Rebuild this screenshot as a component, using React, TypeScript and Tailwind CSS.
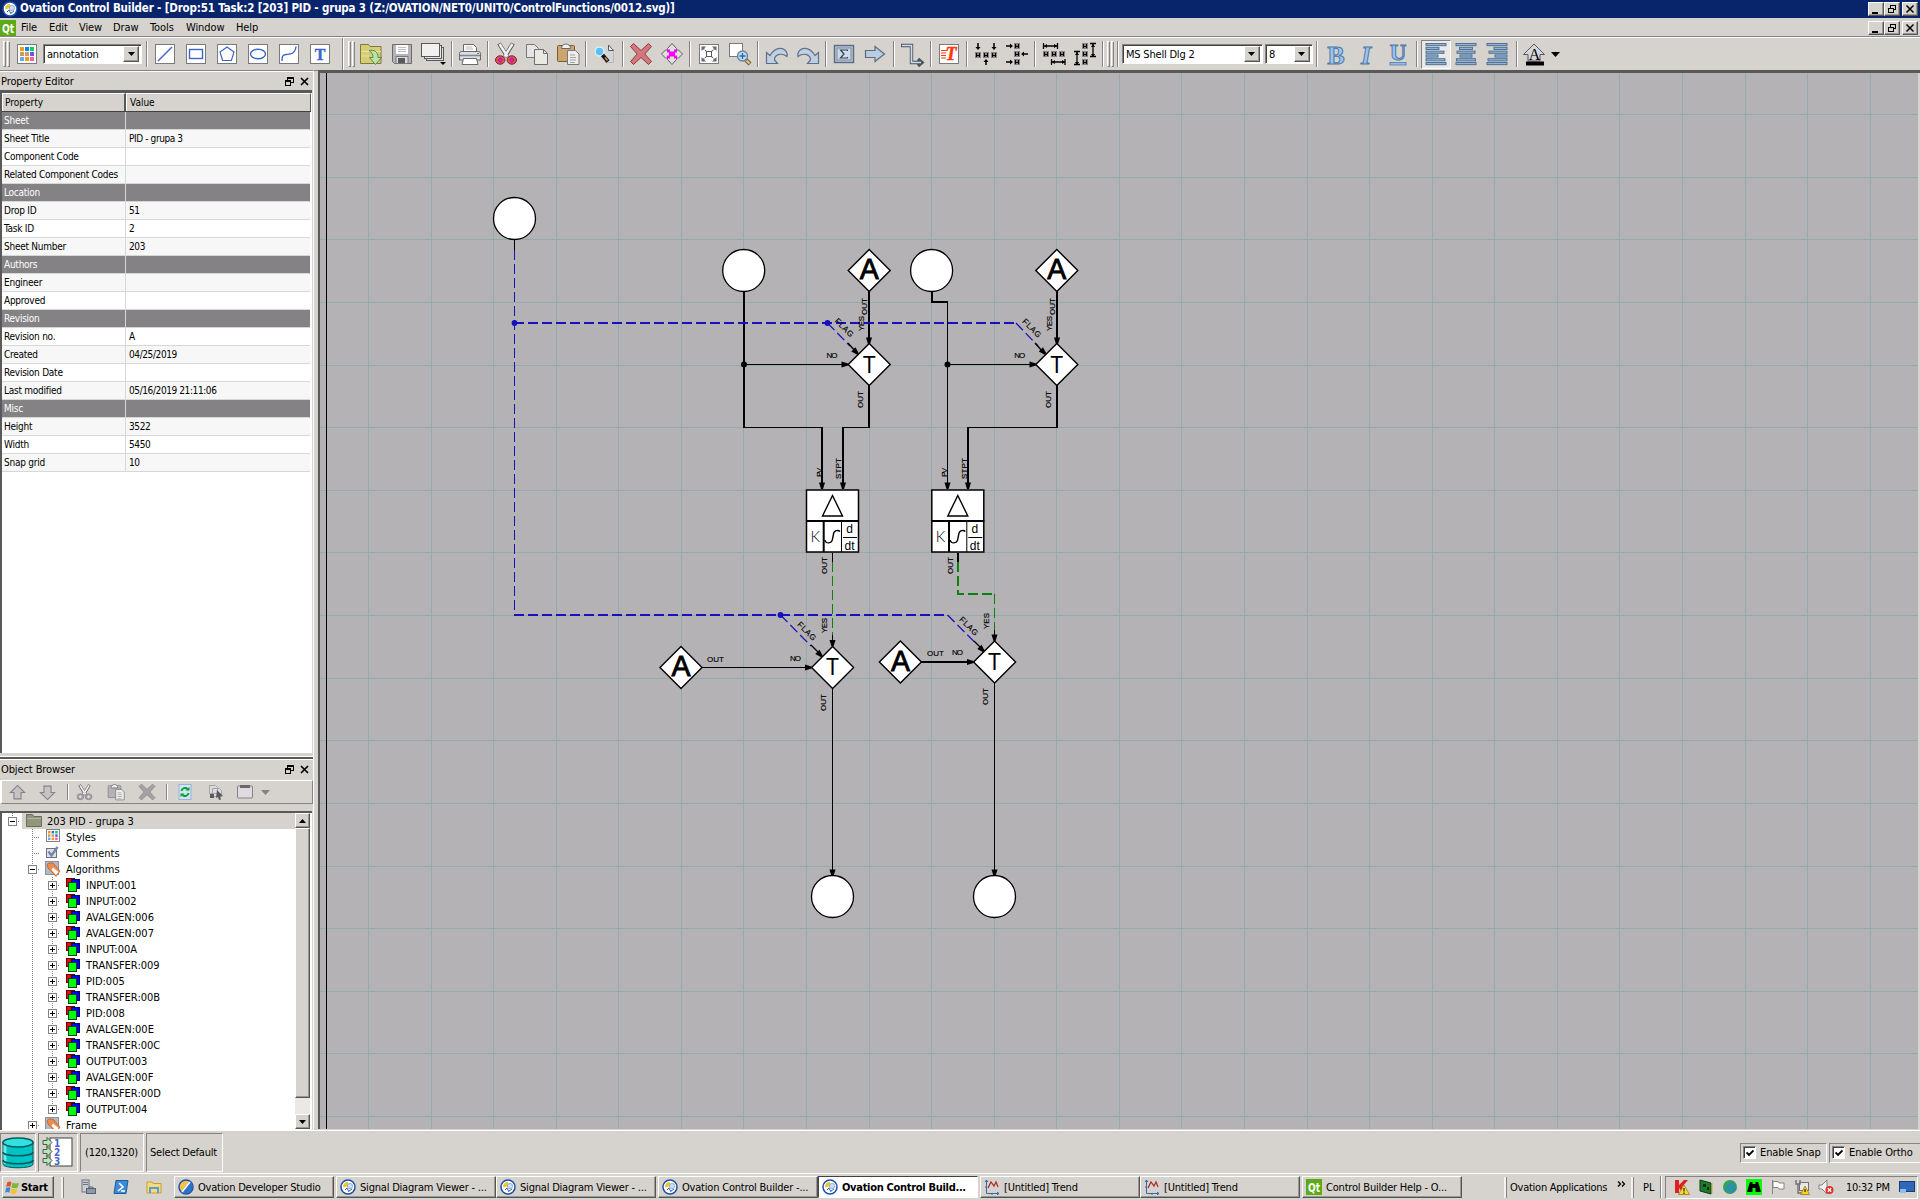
import React from "react";

const OUT =
  "border border-t-white border-l-white border-b-[#555555] border-r-[#555555] shadow-[inset_-1px_-1px_0_#9a9894]";
const IN = "border border-t-[#848284] border-l-[#848284] border-b-white border-r-white";
const FIELD =
  "border border-t-[#848284] border-l-[#848284] border-b-white border-r-white shadow-[inset_1px_1px_0_#424142]";

type P = { children?: React.ReactNode; s?: number; v?: string; c?: string };
const Svg = ({ children, s = 24, v = "0 0 24 24", c = "" }: P) => (
  <svg width={s} height={s} viewBox={v} className={"block shrink-0 overflow-visible " + c} fill="none">
    {children}
  </svg>
);

/* ---------- toolbar icons ---------- */
const Tile = ({ children }: { children: React.ReactNode }) => (
  <Svg>
    <rect x="2.5" y="2.5" width="19" height="19" fill="#fff" stroke="#7a7a7a" />
    {children}
  </Svg>
);
const PAL = ["#ff9a00", "#0086ff", "#00d36a", "#ce9a63", "#c79a73", "#6a55e8", "#6aa6ff", "#ff9a00", "#ff5f9a"];
const Palette = () => (
  <Tile>
    {PAL.map((c, i) => (
      <rect key={i} x={5 + (i % 3) * 5} y={5 + Math.floor(i / 3) * 5} width="4" height="4" fill={c} />
    ))}
  </Tile>
);
const B = "#3a65ce";
const LineI = () => <Tile><path d="M5 19 19 5" stroke={B} strokeWidth="1.4" /></Tile>;
const RectI = () => <Tile><rect x="5.5" y="7.5" width="13" height="9" stroke={B} strokeWidth="1.4" /></Tile>;
const PentI = () => <Tile><path d="m12 5 7 5-2.6 8.5H7.6L5 10z" stroke={B} strokeWidth="1.2" /></Tile>;
const EllI = () => <Tile><ellipse cx="12" cy="12" rx="7.5" ry="4.8" stroke={B} strokeWidth="1.4" /></Tile>;
const CurveI = () => <Tile><path d="M5 19c0-4 0-6 4-6.500s9 0 10-8" stroke={B} strokeWidth="1.4" /></Tile>;
const TextI = () => (
  <Tile>
    <text x="12" y="17.500" textAnchor="middle" fill={B} stroke={B} strokeWidth=".4" className="text-[16px] font-bold [font-family:'Liberation_Serif',serif]">T</text>
  </Tile>
);
const OpenI = () => (
  <Svg>
    <path d="M1.500 4V2.500h8l1.500 2h11V21.500H1.500z" fill="#d6cd77" stroke="#7e7a3c" />
    <path d="M2 9.500h20M2 14h8" stroke="#e9e39c" />
    <path d="M10 8.500c5-1 9 1 9 7h3.500l-6 7-6-7H14c0-3-1-5-4-7z" fill="#b9e6a8" stroke="#5c8a4c" />
  </Svg>
);
const SaveI = () => (
  <Svg>
    <path d="M2.500 2.500h19v19h-17l-2-2z" fill="#b4b4b6" stroke="#6b696b" />
    <rect x="6" y="3" width="12" height="9" fill="#fafafa" />
    <path d="M8 5.500h8M8 7.500h8M8 9.500h8" stroke="#bdbdbd" />
    <rect x="6" y="14.500" width="12" height="7" fill="#dcdcdc" stroke="#77787a" />
    <rect x="8" y="16" width="7" height="5" fill="#5a595a" />
  </Svg>
);
const SheetsI = () => (
  <svg width="30" height="26" viewBox="0 0 30 26" fill="none">
    <rect x="8.500" y="6.500" width="17" height="13" fill="#dedfe0" stroke="#5a595a" />
    <rect x="6.500" y="4.500" width="17" height="13" fill="#e8e8e8" stroke="#5a595a" />
    <rect x="3.500" y="2.500" width="18" height="13" fill="#f0f0f0" stroke="#5a595a" />
    <path d="M22 21h6l-3 3z" fill="#000" />
  </svg>
);
const PrintI = () => (
  <Svg>
    <path d="M5.500 10V2.500h10l3 3V10z" fill="#fafafa" stroke="#6b696b" />
    <path d="M8 5h6M8 7h7" stroke="#bbb" />
    <path d="M1.500 11.500q0-2 2-2h17q2 0 2 2V18h-21z" fill="#dcdee2" stroke="#6b696b" />
    <path d="M2 13.500h20" stroke="#7f8690" strokeWidth="1.500" />
    <path d="M19 11.500h2" stroke="#40a040" />
    <path d="M5.500 16.500h13l1.500 6H4z" fill="#fff" stroke="#6b696b" />
  </Svg>
);
const CutI = ({ g }: { g?: boolean }) => (
  <Svg s={g ? 17 : 24}>
    <path d="M5 1.500 13.500 15M19 1.500 10.500 15" stroke="#5f6062" strokeWidth="4.200" />
    <path d="M5.500 2 13.500 14.500M18.500 2l-8 12.500" stroke="#f0f0f0" strokeWidth="2.400" />
    <ellipse cx="6.200" cy="18" rx="4.700" ry="4.200" fill={g ? "#a5a2a5" : "#d9585f"} stroke={g ? "#848284" : "#7b2028"} />
    <ellipse cx="17.800" cy="18" rx="4.700" ry="4.200" fill={g ? "#a5a2a5" : "#d9585f"} stroke={g ? "#848284" : "#7b2028"} />
    <path d="m6.200 15.700 2.300 2.300-2.300 2.300L3.900 18zM17.800 15.700l2.300 2.300-2.300 2.300-2.300-2.300z" fill={g ? "#dedbde" : "#ff10e0"} stroke={g ? "none" : "#7b2028"} strokeWidth=".7" />
  </Svg>
);
const CopyI = () => (
  <Svg>
    <path d="M1.500 2.500h8l4 4v9h-12z" fill="#e4e5e4" stroke="#77787a" />
    <path d="M9.500 7.500h9l4 4v11h-13z" fill="#e9e8e2" stroke="#6b6c6e" />
    <path d="M18.500 7.500v4h4" stroke="#6b6c6e" />
  </Svg>
);
const PasteI = ({ g }: { g?: boolean }) => (
  <Svg s={g ? 18 : 24}>
    <rect x="1.500" y="3.500" width="17" height="16" rx="1" fill={g ? "#b5b2b5" : "#cda46c"} stroke={g ? "#848284" : "#7b5a30"} />
    <path d="M5.500 6.500c0-6 9-6 9 0z" fill="#f0f0f0" stroke="#6b696b" />
    <path d="M11.500 8.500h8l3.500 3.500v10.500H11.500z" fill="#ececec" stroke="#77787a" />
    <path d="M14 13h5M14 15.500h6M14 18h6M14 20.500h5" stroke="#a5a2a5" />
  </Svg>
);
const PreviewI = () => (
  <Svg>
    <path d="M10 3.500h7.500l4 4.500v12H12z" fill="#d4d5d8" />
    <path d="M21.500 8v12.500H13" stroke="#b5b6ba" />
    <path d="M16.500 3v5.500h5z" fill="#f0f0f0" stroke="#5a595a" />
    <circle cx="7.500" cy="9.500" r="4.400" fill="#5cc0f4" stroke="#d8eef8" strokeWidth="1.500" />
    <path d="m10.500 13 5.500 6.500" stroke="#141414" strokeWidth="4" />
    <path d="m13 15.500 2.500 3" stroke="#c98a50" strokeWidth="1.700" />
  </Svg>
);
const XI = ({ g }: { g?: boolean }) => (
  <Svg s={g ? 18 : 24}>
    <path d="M4.500 1.500 12 8.500 19.500 1.500 22.500 4.500 15.800 12 22.500 19.500 19.500 22.500 12 15.500 4.500 22.500 1.500 19.500 8.200 12 1.500 4.500z" fill={g ? "#a5a2a5" : "#d4777b"} stroke={g ? "#848284" : "#8a3a40"} />
  </Svg>
);
const MoveI = () => (
  <Svg>
    <path d="m12 1.500 4.500 5V8l2 0 4 4-4 4h-2v1.500L12 22.500l-4.500-5V16h-2l-4-4 4-4h2V6.500z" fill="#dedfe0" stroke="#5f6062" />
    <path d="M7 7.500h3v2h4v-2h3v3h-2v3h2v3h-3v-2h-4v2H7v-3h2v-3H7z" fill="#ff00ff" />
  </Svg>
);
const FitI = () => (
  <Tile>
    <rect x="9.500" y="9.500" width="5" height="5" fill="#fff" stroke="#5a595a" />
    <path d="M4.500 4.500H9L4.500 9zM19.500 4.500V9L15 4.500zM4.500 19.500V15L9 19.500zM19.500 19.500H15l4.500-4.500z" fill="#6b696b" />
    <path d="m6 6 3 3M18 6l-3 3M6 18l3-3M18 18l-3-3" stroke="#6b696b" strokeWidth="1.400" strokeDasharray="2 1" />
  </Tile>
);
const ZoomI = () => (
  <Svg>
    <rect x="1.500" y="1.500" width="13" height="13" fill="#fff" stroke="#77787a" />
    <path d="m18 18 4 4" stroke="#6f6038" strokeWidth="4" />
    <path d="m18.500 18.500 3 3" stroke="#e0cc88" strokeWidth="2" />
    <circle cx="14.500" cy="14" r="5" fill="#b8dcf4" stroke="#6c7f90" strokeWidth="1.300" />
    <path d="M14.500 11v6M11.500 14h6" stroke="#2f65a8" strokeWidth="1.300" />
  </Svg>
);
const UndoI = ({ flip }: { flip?: boolean }) => (
  <Svg c={flip ? "-scale-x-100" : ""}>
    <path d="M1.500 10.500v11h11L9.500 18c0-5 6-8 12.500-3.500 2-7-9-13.500-17-1z" fill="#bfd0e4" stroke="#5e7088" strokeWidth="1.200" />
  </Svg>
);
const SigmaI = () => (
  <Svg>
    <rect x="2.500" y="3.500" width="19" height="17" fill="#b4c4da" stroke="#5c6a7c" strokeWidth="1.400" />
    <rect x="5" y="6" width="14" height="12" fill="#cddbea" stroke="#7c8a9c" />
    <path d="M15.500 9V8H8.500l3.500 4-3.500 4h7v-1" stroke="#33404f" strokeWidth="1.200" />
  </Svg>
);
const ArrI = () => (
  <Svg>
    <path d="M2.500 8.500H12V4.500L21.500 12 12 19.500v-4H2.500z" fill="#b8cde4" stroke="#5c6a7c" strokeWidth="1.200" />
  </Svg>
);
const ConnI = () => (
  <Svg>
    <path d="M1 3.500h10.500V20.500H21M18 17l4 3.500-4 3.500" stroke="#4a5560" strokeWidth="3.400" />
    <path d="M2 3.500h9.500v17H21" stroke="#d0dcea" strokeWidth="1.600" />
  </Svg>
);
const RedTI = () => (
  <Tile>
    <text x="14" y="18" textAnchor="middle" fill="#f83810" stroke="#f83810" strokeWidth=".5" className="text-[18px] font-bold italic [font-family:'Liberation_Serif',serif]">T</text>
    <path d="M4 8.500h6M4 11h5M4 13.500h5M4 16h5" stroke="#f83810" />
  </Tile>
);
const Sq = ({ x, y }: { x: number; y: number }) => (
  <g shapeRendering="crispEdges">
    <rect x={x} y={y} width="6" height="6" fill="#848284" />
    <path d={`M${x + 1.5} ${y + 1}v4M${x + 4.5} ${y + 1}v4M${x + 1} ${y + 3}h4`} stroke="#000" />
  </g>
);
const A1 = () => (
  <Svg>
    <Sq x={1} y={10} /><Sq x={9} y={10} /><Sq x={17} y={10} />
    <path d="M4 1v5M20 1v5M12 18v5" stroke="#000" strokeWidth="1.500" />
    <path d="M1.500 5h5L4 8zM17.500 5h5L20 8zM9.500 20h5L12 17z" fill="#000" />
  </Svg>
);
const A2 = () => (
  <Svg>
    <Sq x={9} y={1} /><Sq x={9} y={9} /><Sq x={9} y={17} />
    <path d="M1 4h4M23 12h-4M1 20h4" stroke="#000" strokeWidth="1.500" />
    <path d="M5 1.500v5L8 4zM19 9.500v5L16 12zM5 17.500v5L8 20z" fill="#000" />
  </Svg>
);
const A3 = () => (
  <Svg>
    <Sq x={1} y={9} /><Sq x={9} y={9} /><Sq x={17} y={9} />
    <path d="M1.500 1v6M15.500 1v6M2 4h13M9.500 17v6M23 17v6M10 20h13" stroke="#000" strokeWidth="1.300" />
    <path d="M5 2v4L2 4zM12 2v4l3-2zM13 18v4l-3-2zM20 18v4l3-2z" fill="#000" />
  </Svg>
);
const A4 = () => (
  <Svg>
    <Sq x={9} y={1} /><Sq x={9} y={9} /><Sq x={9} y={17} />
    <path d="M1 9.500h6M1 22.500h6M4 10v13M17 1.500h6M17 14.500h6M20 2v13" stroke="#000" strokeWidth="1.300" />
    <path d="M2 13h4l-2-3zM2 20h4l-2 3zM18 5h4l-2-3zM18 12h4l-2 3z" fill="#000" />
  </Svg>
);
const Letter = ({ ch, c }: { ch: string; c: string }) => (
  <Svg s={28} v="0 0 28 28">
    <text x="14" y={ch === "U" ? 20 : 23.5} textAnchor="middle" fill="#9cc2f0" stroke="#4f7aa8" strokeWidth="1" className={"leading-none [font-family:'Liberation_Serif',serif] " + c}>{ch}</text>
    {ch === "U" && <rect x="6" y="22.500" width="16" height="2.500" fill="#94bcec" stroke="#4f7aa8" strokeWidth=".8" />}
  </Svg>
);
const AlignI = ({ m }: { m: "l" | "c" | "r" }) => (
  <Svg>
    {[20, 13, 18, 12, 19, 20].map((w, i) => (
      <rect key={i} x={m === "l" ? 2 : m === "c" ? 12 - w / 2 : 22 - w} y={1.500 + i * 3.800} width={w} height="2.200" fill="#8fb4dc" stroke="#49698c" strokeWidth=".9" />
    ))}
  </Svg>
);
const ColorI = () => (
  <Svg>
    <path d="M12 2 22.500 12.500H18V19H6v-6.500H1.500z" fill="#d6d7de" stroke="#5a595a" />
    <text x="12.500" y="17.500" textAnchor="middle" fill="#000" className="text-[16px] [font-family:'Liberation_Serif',serif]">A</text>
    <rect x="4" y="19.500" width="18" height="4" fill="#000" />
  </Svg>
);

const Btn = ({ children, w = "w-[31px]" }: { children: React.ReactNode; w?: string }) => (
  <div className={"flex h-[33px] shrink-0 items-center justify-center " + w}>{children}</div>
);
const Sep = ({ w = "w-[5.8px]" }: { w?: string }) => (
  <div className={"flex h-[33px] shrink-0 items-center justify-center " + w}>
    <div className="h-[26px] w-[2px] shrink-0 border-l border-[#848284] bg-white" />
  </div>
);
const Handle = () => (
  <div className="flex shrink-0 gap-[1px]">
    <div className="h-[26px] w-[3px] border border-b-[#848284] border-l-white border-r-[#848284] border-t-white" />
    <div className="h-[26px] w-[3px] border border-b-[#848284] border-l-white border-r-[#848284] border-t-white" />
  </div>
);
const Combo = ({ t, w }: { t: string; w: string }) => (
  <div className={"flex h-[20px] shrink-0 items-center bg-white p-[2px] " + FIELD + " " + w}>
    <span className="flex-1 pl-[1px] text-[11px] leading-none tracking-[-0.2px]">{t}</span>
    <span className={"flex h-[16px] w-[16px] items-center justify-center bg-[#d6d3ce] " + OUT}>
      <svg width="7" height="4" viewBox="0 0 7 4"><path d="M0 0h7L3.500 4z" /></svg>
    </span>
  </div>
);

const Logo = ({ s = 16 }: { s?: number }) => (
  <Svg s={s} v="0 0 16 16">
    <circle cx="8" cy="8" r="7" fill="#fff" stroke="#1c50a8" strokeWidth="1.500" />
    <path d="M3 8c0-3 2-5 5-5v3L6 8z" fill="#f4c430" />
    <circle cx="10" cy="7" r="2.600" fill="#cfe0f4" stroke="#7ca0cc" strokeWidth=".8" />
    <path d="M5 11l2-2 2 4M9 12l3-2" stroke="#3a66a8" />
  </Svg>
);

const WinBtns = () => (
  <div className="flex text-black">
    {[0, 1, 2].map((i) => (
      <div key={i} className={"flex h-[14px] w-[16px] items-center justify-center bg-[#d6d3ce] " + OUT + (i === 2 ? " ml-[2px]" : "")}>
        <svg width="10" height="10" viewBox="0 0 10 10" fill="none" stroke="#000" shapeRendering="crispEdges">
          {i === 0 && <path d="M1 8.500h6" strokeWidth="2" />}
          {i === 1 && <path d="M3.500 4V1.500h5v4H6.500M3 1.500h6M1.500 4.500h5v4h-5zM1 4.500h6" />}
          {i === 2 && <path d="m1.500 1.500 7 7M8.500 1.500l-7 7" strokeWidth="1.500" shapeRendering="auto" />}
        </svg>
      </div>
    ))}
  </div>
);

/* ---------- docks ---------- */
const DockTitle = ({ t }: { t: string }) => (
  <div className="flex h-[19px] w-[313px] shrink-0 items-center justify-between border-t border-white pl-[1px] pr-[4px]">
    <span className="text-[11px] leading-none tracking-[-0.1px]">{t}</span>
    <span className="flex gap-[6px]">
      <svg width="9" height="9" viewBox="0 0 9 9" fill="none" stroke="#000" shapeRendering="crispEdges"><path d="M2.500 3V.5h6v5H6M2 1.500h6M.5 3.500h5v5h-5zM0 4.500h6" /></svg>
      <svg width="9" height="9" viewBox="0 0 9 9" fill="none" stroke="#000" strokeWidth="1.700"><path d="m1 1 7 7M8 1 1 8" /></svg>
    </span>
  </div>
);

const ROWS: [string, string?][] = [
  ["Sheet"], ["Sheet Title", "PID - grupa 3"], ["Component Code", ""], ["Related Component Codes", ""],
  ["Location"], ["Drop ID", "51"], ["Task ID", "2"], ["Sheet Number", "203"],
  ["Authors"], ["Engineer", ""], ["Approved", ""],
  ["Revision"], ["Revision no.", "A"], ["Created", "04/25/2019"], ["Revision Date", ""], ["Last modified", "05/16/2019 21:11:06"],
  ["Misc"], ["Height", "3522"], ["Width", "5450"], ["Snap grid", "10"],
];

const ALG = ["INPUT:001", "INPUT:002", "AVALGEN:006", "AVALGEN:007", "INPUT:00A", "TRANSFER:009", "PID:005", "TRANSFER:00B", "PID:008", "AVALGEN:00E", "TRANSFER:00C", "OUTPUT:003", "AVALGEN:00F", "TRANSFER:00D", "OUTPUT:004"];

/* Expander cell, 20px wide, with dotted connector lines. */
const Exp = ({ k, up = true, down = true }: { k: "+" | "-" | "" | "|"; up?: boolean; down?: boolean }) => (
  <svg width="20" height="16" viewBox="0 0 20 16" className="shrink-0" fill="none" shapeRendering="crispEdges">
    <g stroke="#848284" strokeDasharray="1 1">
      {up && <path d="M12.500 0v8" />}
      {down && <path d="M12.500 8v8" />}
      {k !== "|" && <path d="M12 8.500h8" />}
    </g>
    {(k === "+" || k === "-") && (
      <>
        <rect x="8.500" y="4.500" width="8" height="8" fill="#fff" stroke="#848284" />
        <path d="M10 8.500h5" stroke="#000" />
        {k === "+" && <path d="M12.500 6v5" stroke="#000" />}
      </>
    )}
  </svg>
);
const AlgIcon = () => (
  <Svg s={16} v="0 0 16 16">
    <rect x="1.500" y="1.500" width="8" height="8" fill="#f00" stroke="#600" />
    <rect x="6.500" y="2.500" width="8" height="9" fill="#00f" stroke="#006" />
    <rect x="3.500" y="5.500" width="8" height="9" fill="#0f0" stroke="#042" />
  </Svg>
);
const TagIcon = () => (
  <Svg s={16} v="0 0 16 16">
    <rect x=".5" y=".5" width="13" height="13" fill="#b4b8c4" stroke="#8c90a0" />
    <path d="M2 4 3.500 2H8l7 8-4 5.500L3 7z" fill="#f08a4a" stroke="#a85a28" strokeWidth=".7" />
    <path d="M8 6.500l5.500 4.500-2.500 3L6.500 9z" fill="#fff" />
  </Svg>
);
const FolderIcon = () => (
  <Svg s={16} v="0 0 16 16"><path d="M.5 1.500h6l1.500 2h7.500v10H.5z" fill="#94967b" stroke="#6b6d5a" /><path d="M1 5.500h14" stroke="#b5b79c" /></Svg>
);
const StylesIcon = () => (
  <Svg s={16} v="0 0 16 16">
    <rect x="1.500" y=".5" width="13" height="12" fill="#fff" stroke="#848284" />
    {PAL.map((c, i) => <rect key={i} x={3 + (i % 3) * 3.600} y={2 + Math.floor(i / 3) * 3.300} width="2.500" height="2.500" fill={c} />)}
  </Svg>
);
const CommentIcon = () => (
  <Svg s={16} v="0 0 16 16"><rect x="1.500" y="3.500" width="10" height="9" fill="#dfe1e8" stroke="#6b7180" /><path d="M3.500 6.500l3 4 6-8.500" stroke="#7484a8" strokeWidth="2.400" /></Svg>
);

const TreeRow = ({ children, t, c = "" }: { children: React.ReactNode; t: string; c?: string }) => (
  <div className={"flex h-[16px] shrink-0 items-center " + c}>
    {children}
    <span className="ml-[5px] whitespace-nowrap text-[11px] leading-none">{t}</span>
  </div>
);

/* ---------- diagram ---------- */
const CX = 320, CY = 73;
const vs = Array.from({ length: 25 }, (_, i) => 368.5 + Math.round(i * 62.57));
const hs = Array.from({ length: 17 }, (_, i) => 114.5 + Math.round(i * 62.63));

const Circle = ({ x, y }: { x: number; y: number }) => <circle cx={x} cy={y} r="21" fill="#fff" stroke="#000" strokeWidth="1.300" />;
const Dia = ({ x, y, t }: { x: number; y: number; t: string }) => (
  <g>
    <path d={`M${x} ${y - 21}l21 21-21 21-21-21z`} fill="#fff" stroke="#000" strokeWidth="1.400" />
    <text
      x={x}
      y={y + (t === "A" ? 8.5 : 8)}
      textAnchor="middle"
      stroke="#000"
      strokeWidth={t === "A" ? 0.9 : 0}
      textLength={t === "A" ? 19 : 13}
      lengthAdjust="spacingAndGlyphs"
      className={t === "A" ? "text-[29px] [font-family:'Liberation_Sans',sans-serif]" : "text-[23px] [font-family:'Liberation_Sans',sans-serif]"}
    >
      {t}
    </text>
  </g>
);
const V = ({ x, y, t, l = 17 }: { x: number; y: number; t: string; l?: number }) => (
  <text transform={`translate(${x + 3} ${y}) rotate(-90)`} textLength={l} className="text-[8px] [font-family:'Liberation_Sans',sans-serif]" stroke="#000" strokeWidth=".15">{t}</text>
);
const H = ({ x, y, t, l }: { x: number; y: number; t: string; l: number }) => (
  <text x={x} y={y + 3} textLength={l} className="text-[8px] [font-family:'Liberation_Sans',sans-serif]" stroke="#000" strokeWidth=".15">{t}</text>
);
const Flag = ({ x, y }: { x: number; y: number }) => (
  <text transform={`translate(${x} ${y}) rotate(45)`} x="-11.500" y="3" textLength="23" className="text-[8px] [font-family:'Liberation_Sans',sans-serif]" stroke="#000" strokeWidth=".15">FLAG</text>
);
const Arr = ({ x, y, a = 0 }: { x: number; y: number; a?: number }) => (
  <path transform={`translate(${x} ${y}) rotate(${a})`} d="M-3-6.500h6L1 0h-2z" fill="#000" />
);
const Pid = ({ x }: { x: number }) => (
  <g transform={`translate(${x} 489)`}>
    <rect x=".5" y="1" width="52" height="62" fill="#fff" stroke="#000" strokeWidth="1.500" />
    <path d="M0 32h53M17.700 32v31" stroke="#000" strokeWidth="2" />
    <path d="M35.500 32v31M37 48.500h14" stroke="#000" />
    <path d="M26.500 6.500 16.500 27h20z" fill="none" stroke="#000" strokeWidth="1.400" />
    <path d="M19 51c0 4 7 4 7.500-1l1-5c.5-4 5-4 6.500-2.500" fill="none" stroke="#000" strokeWidth="1.400" />
    <text x="4.500" y="53" className="text-[15px] font-light [font-family:Lato,sans-serif]">K</text>
    <text x="43.500" y="44" textAnchor="middle" className="text-[12px] [font-family:'Liberation_Sans',sans-serif]">d</text>
    <text x="43.500" y="61" textAnchor="middle" className="text-[12px] [font-family:'Liberation_Sans',sans-serif]">dt</text>
  </g>
);

const Diagram = () => (
  <svg width="1598" height="1056" viewBox={`${CX} ${CY} 1598 1056`} className="block shrink-0 bg-[#b5b2b5]">
    <g stroke="#93abab" shapeRendering="crispEdges">
      {vs.map((x) => <path key={x} d={`M${x} 73V1129`} />)}
      {hs.map((y) => <path key={y} d={`M320 ${y}H1918`} />)}
    </g>
    <path d="M326.500 73V1129" stroke="#000" shapeRendering="crispEdges" />
    <g fill="none" stroke="#000" shapeRendering="crispEdges">
      <path d="M514.500 239v11M947.500 302v187M743 364.500h105M947 364.500h88M743 427.500h79M843 427.500h27M968 427.500h89M702 667.500h110M832.500 553v9M832.500 634v12M994.500 629v12M832.500 688v187M994.500 683v192" />
      <path strokeWidth="2" d="M744 291v137M822 427v62M843 427v62M869 291v52M869 385v43M932 291v11h16M1057 291v52M1057 385v43M968 427v62M958 553v9M921 662h52" />
    </g>
    <g fill="none" stroke="#1810bd" shapeRendering="crispEdges">
      <path d="M514.500 250V615" strokeDasharray="10 4" />
      <path d="M514 323H1016M514 615H947" strokeWidth="2" strokeDasharray="10 4" />
    </g>
    <g fill="none" stroke="#1810bd" strokeWidth="1.300" strokeDasharray="10 4">
      <path d="M827.500 323 850 346M1016 323l22 23M780.500 615 811 646M947.500 615l28 28" />
    </g>
    <g stroke="#000" strokeWidth="1.300">
      <path d="M848 343l8 9M1035 343l8 9M811 645l9 9M974 641l8 8" />
    </g>
    <g fill="none" stroke="#088208" shapeRendering="crispEdges">
      <path d="M832.500 562v73M994.500 594v36" strokeDasharray="10 4" />
      <path d="M958 562v32h36" strokeWidth="2" strokeDasharray="10 4" />
    </g>
    <g fill="#1810bd">
      <circle cx="514.500" cy="323" r="2.900" /><circle cx="827.500" cy="323" r="2.900" /><circle cx="780.500" cy="615" r="2.900" />
    </g>
    <circle cx="744" cy="364.500" r="3" /><circle cx="947.500" cy="364.500" r="3" />
    <Circle x={514.5} y={218.5} /><Circle x={743.7} y={270.5} /><Circle x={931.6} y={270.5} />
    <Circle x={832.5} y={896.5} /><Circle x={994.5} y={896.5} />
    <Dia x={869.2} y={270.5} t="A" /><Dia x={1056.8} y={270.5} t="A" />
    <Dia x={869.2} y={364.5} t="T" /><Dia x={1056.8} y={364.5} t="T" />
    <Dia x={681} y={667.4} t="A" /><Dia x={832.6} y={667.4} t="T" />
    <Dia x={900.4} y={662} t="A" /><Dia x={994.6} y={662} t="T" />
    <Pid x={806} /><Pid x={931.3} />
    <Arr x={869} y={344} /><Arr x={1057} y={344} /><Arr x={848} y={364.5} a={-90} /><Arr x={1036} y={364.5} a={-90} />
    <Arr x={858} y={354} a={-45} /><Arr x={1045.5} y={354} a={-45} /><Arr x={822} y={656.5} a={-45} /><Arr x={984} y={651.5} a={-45} />
    <Arr x={822} y={489} /><Arr x={843} y={489} /><Arr x={947.5} y={489} /><Arr x={968} y={489} />
    <Arr x={832.5} y={646.5} /><Arr x={994.5} y={641} /><Arr x={811.5} y={667.5} a={-90} /><Arr x={973.5} y={662} a={-90} />
    <Arr x={832.5} y={876} /><Arr x={994.5} y={876} />
    <V x={864} y={315} t="OUT" /><V x={860.5} y={331} t="YES" l={15} /><V x={1052} y={315} t="OUT" /><V x={1048.5} y={331} t="YES" l={15} />
    <V x={860.4} y={408} t="OUT" /><V x={1048} y={408} t="OUT" />
    <H x={826.5} y={355} t="NO" l={11} /><H x={1014.3} y={355} t="NO" l={11} />
    <Flag x={844.5} y={327.5} /><Flag x={1032} y={328} /><Flag x={807} y={631} /><Flag x={969} y={626} />
    <V x={819} y={477} t="PV" l={9} /><V x={944.3} y={477} t="PV" l={9} />
    <V x={838.3} y={479} t="STPT" l={21} /><V x={964.3} y={479} t="STPT" l={21} />
    <V x={824.3} y={574} t="OUT" /><V x={950} y={574} t="OUT" />
    <V x={824.3} y={633} t="YES" l={15} /><V x={986.3} y={629} t="YES" l={16} />
    <H x={707} y={659} t="OUT" l={17} /><H x={790} y={658} t="NO" l={11} /><H x={927} y={653} t="OUT" l={17} /><H x={952} y={652} t="NO" l={11} />
    <V x={823.3} y={711} t="OUT" /><V x={985} y={705} t="OUT" />
  </svg>
);

/* ---------- taskbar ---------- */
const TrendI = () => (
  <Svg s={16} v="0 0 16 16"><path d="M2.500 1v13.500H15M1 3l1.500-2L4 3M13 13l2 1.500L13 16M2.500 8H1M8 14.500V16" stroke="#3a66b0" /><path d="m4 9 3-6 3 4 2-4 2 5" stroke="#b02828" strokeWidth="1.200" /></Svg>
);
const DevI = () => (
  <Svg s={16} v="0 0 16 16"><circle cx="8" cy="8" r="7" fill="#f4c04a" stroke="#1c50a8" strokeWidth="1.500" /><path d="M12 2 3 13a7 7 0 0 0 10-1 7 7 0 0 0-1-10z" fill="#2a72c8" /><path d="m12 3-8 10" stroke="#fff" strokeWidth="1.500" /></Svg>
);
const QtI = ({ s = 16 }: { s?: number }) => (
  <Svg s={s} v="0 0 16 16"><rect width="16" height="16" fill="#5caa15" /><text x="8" y="12.500" textAnchor="middle" fill="#fff" className="text-[12px] font-bold [font-family:'DejaVu_Sans_Condensed',sans-serif]" textLength="12" lengthAdjust="spacingAndGlyphs">Qt</text></Svg>
);
const Task = ({ i, t, on, c = "" }: { i: React.ReactNode; t: string; on?: boolean; c?: string }) => (
  <div className={"flex h-[22px] w-[160px] shrink-0 items-center pl-[3px] " + (on ? "border border-b-white border-l-[#424142] border-r-white border-t-[#424142] bg-white font-bold " : OUT + " ") + c}>
    {i}
    <span className={"ml-[4px] whitespace-nowrap text-[11px] leading-none " + (on ? "tracking-[-0.3px]" : "tracking-[-0.2px]")}>{t}</span>
  </div>
);
const Bar = () => <div className="h-[21px] w-[3px] shrink-0 border-r border-[#848284] bg-[#f4f2ee]" />;
const Check = ({ t, c }: { t: string; c: string }) => (
  <div className={"flex h-[20px] items-center pl-[2px] " + IN + " " + c}>
    <span className={"flex h-[13px] w-[13px] items-center justify-center bg-white " + FIELD}>
      <svg width="8" height="8" viewBox="0 0 8 8" fill="none"><path d="m.5 3.500 2.500 2.500L7.500 1.500" stroke="#000" strokeWidth="1.900" /></svg>
    </span>
    <span className="ml-[4px] text-[11px] leading-none tracking-[-0.1px]">{t}</span>
  </div>
);

export default function App() {
  return (
    <div className="flex h-[1200px] w-[1920px] flex-col overflow-hidden bg-[#d6d3ce] text-black [font-family:'DejaVu_Sans_Condensed','DejaVu_Sans',sans-serif] [font-stretch:condensed]">
      <div className="flex h-[18px] shrink-0 items-center bg-[#08246b] pl-[2px] pr-[2px]">
        <Logo />
        <span className="ml-[2px] flex-1 whitespace-nowrap text-[11.500px] font-bold leading-none tracking-[-0.16px] text-white">
          Ovation Control Builder - [Drop:51 Task:2 [203] PID - grupa 3 (Z:/OVATION/NET0/UNIT0/ControlFunctions/0012.svg)]
        </span>
        <WinBtns />
      </div>
      <div className="flex h-[19px] shrink-0 items-center border-b border-[#848284] pr-[2px] pt-px text-[11px] leading-none tracking-[-0.1px]">
        <QtI />
        <span className="ml-[5px] w-[28px]">File</span>
        <span className="w-[30px]">Edit</span>
        <span className="w-[34px]">View</span>
        <span className="w-[37px]">Draw</span>
        <span className="w-[36px]">Tools</span>
        <span className="w-[50px]">Window</span>
        <span className="flex-1">Help</span>
        <WinBtns />
      </div>

      <div className="flex h-[33px] shrink-0 items-center border-t border-white pl-[3px]">
        <Handle />
        <div className="ml-[5px]"><Palette /></div>
        <div className="ml-[4px] flex"><Combo t="annotation" w="w-[99px]" /></div>
        <Sep w="w-[10px]" />
        <div className="ml-[-3px] flex"><Btn><LineI /></Btn><Btn><RectI /></Btn><Btn><PentI /></Btn><Btn><EllI /></Btn><Btn><CurveI /></Btn><Btn><TextI /></Btn></div>
        <div className="ml-[7px] h-[32px] w-[2px] border-l border-[#848284] bg-white" />
        <div className="ml-[4px]"><Handle /></div>
        <div className="flex">
          <Btn><OpenI /></Btn><Btn><SaveI /></Btn><Btn w="w-[32px]"><SheetsI /></Btn>
          <Sep w="w-[5px]" /><Btn><PrintI /></Btn>
          <Sep w="w-[5px]" /><Btn><CutI /></Btn><Btn><CopyI /></Btn><Btn><PasteI /></Btn>
          <Sep /><Btn><PreviewI /></Btn>
          <Sep /><Btn><XI /></Btn><Btn><MoveI /></Btn>
          <Sep /><Btn><FitI /></Btn><Btn><ZoomI /></Btn>
          <Sep /><Btn><UndoI /></Btn><Btn><UndoI flip /></Btn>
          <Sep /><Btn><SigmaI /></Btn><Btn><ArrI /></Btn>
          <Sep /><Btn><ConnI /></Btn>
          <Sep /><Btn><RedTI /></Btn>
          <Sep /><Btn><A1 /></Btn><Btn><A2 /></Btn>
          <Sep /><Btn><A3 /></Btn><Btn><A4 /></Btn>
          <Sep />
        </div>
        <div className="ml-[1px]"><Handle /></div>
        <Sep w="w-[8px]" />
        <Combo t="MS Shell Dlg 2" w="w-[141px]" />
        <div className="ml-[2px] flex"><Combo t="8" w="w-[48px]" /></div>
        <Sep w="w-[9px]" />
        <Btn w="w-[28px]"><Letter ch="B" c="text-[26px] font-bold" /></Btn>
        <Btn w="w-[32px]"><Letter ch="I" c="text-[26px] font-bold italic" /></Btn>
        <Btn w="w-[32px]"><Letter ch="U" c="text-[23px] font-bold" /></Btn>
        <Sep w="w-[7px]" />
        <div className={"flex h-[29px] w-[30px] items-center justify-center bg-[#eae9e6] " + IN}><AlignI m="l" /></div>
        <Btn w="w-[31px]"><AlignI m="c" /></Btn>
        <Btn w="w-[31px]"><AlignI m="r" /></Btn>
        <Sep w="w-[8px]" />
        <Btn w="w-[26px]"><ColorI /></Btn>
        <svg width="9" height="5" viewBox="0 0 9 5" className="ml-[4px]"><path d="M0 0h9L4.500 5z" /></svg>
      </div>

      <div className="flex h-[1060px] shrink-0">
        <div className="flex w-[313px] shrink-0 flex-col border-t border-[#848284]">
          <DockTitle t="Property Editor" />
          <div className="flex h-[663px] w-[312px] shrink-0 flex-col border-l-2 border-t-[3px] border-[#5a595a] border-r-white bg-white">
            <div className="flex h-[19px] w-[309px] shrink-0 border-b border-[#424142] bg-[#d6d3ce] text-[10px] leading-none">
              <div className="flex w-[124px] items-center border-l border-r-2 border-t border-l-white border-r-[#5a595a] border-t-white pl-[2px]">Property</div>
              <div className="flex flex-1 items-center border-l border-r border-t border-l-white border-r-[#5a595a] border-t-white pl-[3px]">Value</div>
            </div>
            {ROWS.map(([k, v], i) => {
              const g = v === undefined;
              return (
                <div key={i} className={"flex h-[18px] w-[308px] shrink-0 border-b border-[#d8d7d8] text-[10px] leading-none " + (g ? "bg-[#848284] text-white" : i % 2 ? "bg-[#f7f7f7]" : "bg-white")}>
                  <div className="flex w-[124px] items-center whitespace-nowrap border-r border-[#d8d7d8] pl-[2px] tracking-[-0.25px]">{k}</div>
                  <div className="flex items-center whitespace-nowrap pl-[3px] tracking-[-0.4px]">{v}</div>
                </div>
              );
            })}
          </div>
          <div className="h-[4px] shrink-0 border-b border-white" />
          <div className="h-[2px] shrink-0 bg-[#5a595a]" />
          <DockTitle t="Object Browser" />
          <div className="mt-[2px] flex h-[24px] shrink-0 items-center border-b border-l-2 border-r border-t border-b-[#848284] border-l-white border-r-[#848284] border-t-white">
            <Btn w="w-[30px]"><Svg s={17}><path d="m12 2 10 10h-5v9H7v-9H2z" fill="#c6c3c6" stroke="#848284" strokeWidth="1.500" /></Svg></Btn>
            <Btn w="w-[31px]"><Svg s={17}><path d="m12 22 10-10h-5V3H7v9H2z" fill="#c6c3c6" stroke="#848284" strokeWidth="1.500" /></Svg></Btn>
            <div className="ml-[4px] h-[16px] w-[2px] border-l border-[#848284] bg-white" />
            <Btn w="w-[31px]"><CutI g /></Btn>
            <Btn w="w-[31px]"><PasteI g /></Btn>
            <Btn w="w-[31px]"><XI g /></Btn>
            <div className="ml-[4px] h-[16px] w-[2px] border-l border-[#848284] bg-white" />
            <Btn w="w-[33px]">
              <Svg s={16} v="0 0 16 16"><rect x="2" y=".5" width="12" height="15" fill="#cfe4fa" stroke="#9ab4d4" /><path d="M4.500 7a3.500 3.500 0 0 1 6-2M11.500 9a3.500 3.500 0 0 1-6 2" stroke="#08a028" strokeWidth="2" /><path d="M8.500 6.500h4V3zM7.500 9.500h-4V13z" fill="#08a028" /></Svg>
            </Btn>
            <Btn w="w-[30px]">
              <Svg s={16} v="0 0 16 16"><path d="M1.500 1.500h6l2 2v6h-8zM4.500 4.500h7l2 2v6h-9z" fill="#dedbde" stroke="#a5a2a5" /><path d="M9 6l6 6-3 .500 1 3-2 .500-1-3-2 1zM2 10h4v4H2z" fill="#5a595a" /></Svg>
            </Btn>
            <Btn w="w-[28px]">
              <Svg s={16} v="0 0 16 16"><rect x=".5" y="2" width="15" height="12" rx="1" fill="#dedbde" stroke="#848284" /><rect x="3" y="1" width="10" height="3" fill="#6b696b" /></Svg>
            </Btn>
            <svg width="9" height="5" viewBox="0 0 9 5" className="ml-[2px]"><path d="M0 0h9L4.500 5z" fill="#848284" /></svg>
          </div>
          <div className="mt-[7px] flex h-[319px] w-[312px] shrink-0 border-l-2 border-t-2 border-[#5a595a] bg-white">
            <div className="flex h-[316px] w-[293px] flex-col overflow-hidden">
              <TreeRow t="203 PID - grupa 3" c="bg-[linear-gradient(to_right,white_20px,#d6d3ce_20px)]">
                <span className="ml-[-2px]" /><Exp k="-" down={false} /><span className="w-[6px]" /><FolderIcon />
              </TreeRow>
              <TreeRow t="Styles"><span className="w-[18px]" /><Exp k="" /><span className="w-[5px]" /><StylesIcon /></TreeRow>
              <TreeRow t="Comments"><span className="w-[18px]" /><Exp k="" /><span className="w-[5px]" /><CommentIcon /></TreeRow>
              <TreeRow t="Algorithms"><span className="w-[18px]" /><Exp k="-" /><span className="w-[5px]" /><TagIcon /></TreeRow>
              {ALG.map((a, i) => (
                <TreeRow key={a} t={a}><span className="w-[18px]" /><Exp k="|" /><Exp k="+" down={i < ALG.length - 1} /><span className="w-[5px]" /><AlgIcon /></TreeRow>
              ))}
              <TreeRow t="Frame"><span className="w-[18px]" /><Exp k="+" /><span className="w-[5px]" /><TagIcon /></TreeRow>
            </div>
            <div className="flex h-[316px] w-[15px] flex-col bg-[#eae9e6]">
              <div className={"flex h-[15px] items-center justify-center bg-[#d6d3ce] " + OUT}><svg width="7" height="4" viewBox="0 0 7 4"><path d="M0 4h7L3.500 0z" /></svg></div>
              <div className={"h-[270px] bg-[#d6d3ce] " + OUT} />
              <div className="h-[16px]" />
              <div className={"flex h-[15px] items-center justify-center bg-[#d6d3ce] " + OUT}><svg width="7" height="4" viewBox="0 0 7 4"><path d="M0 0h7L3.500 4z" /></svg></div>
            </div>
          </div>
        </div>
        <div className="w-[5px] shrink-0 border-l border-t border-l-white border-t-[#848284]" />
        <div className="flex h-[1059px] flex-1 flex-col border-l-2 border-t-[3px] border-l-[#5a595a] border-t-[#5a595a]">
          <Diagram />
        </div>
      </div>

      <div className="flex h-[44px] shrink-0 items-center border-b border-t border-white pt-px text-[11px] leading-none">
        <div className={"flex h-[39px] w-[36px] items-center justify-center " + IN}>
          <svg width="32" height="32" viewBox="0 0 32 32">
            <path d="M1 5v22c0 5 30 5 30 0V5" fill="#00c3c6" stroke="#005a5a" />
            <path d="M3 7v20" stroke="#6be8e8" strokeWidth="3" />
            <ellipse cx="16" cy="5.500" rx="15" ry="4.500" fill="#31e0e0" stroke="#005a5a" strokeWidth="1.500" />
            <path d="M1 15c0 5 30 5 30 0M1 23c0 5 30 5 30 0" fill="none" stroke="#005a5a" strokeWidth="1.500" />
          </svg>
        </div>
        <div className={"ml-[2px] flex h-[39px] w-[40px] items-center justify-center " + IN}>
          <svg width="32" height="31" viewBox="0 0 32 31">
            <rect x="8" y="1" width="22" height="28" fill="#fff" stroke="#424142" />
            {[1, 2, 3].map((n) => (
              <g key={n}>
                <path d={`M1 ${n * 9 - 5.500}h4v-3l5 5-5 5v-3H1z`} fill="#b5e8b5" stroke="#4a5a4a" />
                <text x="12" y={n * 9 + 1} fill="#4a65ce" className="text-[10px] font-bold [font-family:'DejaVu_Sans',sans-serif]">{n}</text>
              </g>
            ))}
          </svg>
        </div>
        <div className={"ml-[2px] flex h-[39px] w-[64px] items-center pl-[4px] tracking-[-0.2px] " + IN}>(120,1320)</div>
        <div className={"ml-[2px] flex h-[39px] w-[77px] items-center whitespace-nowrap pl-[3px] tracking-[-0.2px] " + IN}>Select Default</div>
        <div className="flex-1" />
        <Check t="Enable Snap" c="w-[87px]" />
        <Check t="Enable Ortho" c="ml-[2px] w-[91px] border-r-0" />
      </div>

      <div className="flex h-[26px] shrink-0 items-center pl-[2px] text-[11px] leading-none">
        <div className={"flex h-[22px] w-[52px] items-center pl-[1px] font-bold " + OUT}>
          <Svg s={17} v="0 0 16 16">
            <path d="M3 3c2-1 3-1 4 0L6 7.500C5 6.500 3.500 6.500 2 7.500z" fill="#e8502a" /><path d="M8 3.500c2 1 4 1 6 0l-1 4.500c-2 1-4 1-6 0z" fill="#7ab83a" />
            <path d="M2 8.500c1-1 3-1 4 0L5 13c-1-1-3-1-4 0z" fill="#3a86d8" /><path d="M7 9c2 1 3.500 1 5.500 0l-1 4.500c-2 1-4 1-5.500 0z" fill="#f8c030" />
          </Svg>
          <span className="tracking-[-0.3px]">Start</span>
        </div>
        <div className="ml-[7px]"><Bar /></div>
        <div className="ml-[16px] flex w-[94px] gap-[17px]">
          <Svg s={16} v="0 0 16 16"><rect x="2" y="1" width="7" height="12" fill="#c8ccd4" stroke="#70757e" /><path d="M3 3.500h5M3 5.500h5" stroke="#70757e" /><rect x="6.500" y="9.500" width="9" height="5" fill="#8a98aa" stroke="#5a6270" /><path d="M9 9V8h4v1" stroke="#5a6270" /></Svg>
          <Svg s={16} v="0 0 16 16"><path d="M3 1.500h12l-2 13H1z" fill="#3a8cd8" stroke="#1c5a9c" /><path d="m6 4 4 4-5 4M8 12h4" stroke="#fff" strokeWidth="1.600" /></Svg>
          <Svg s={16} v="0 0 16 16"><path d="M1 3h5l1 1.500h8V14H1z" fill="#f4dc7a" stroke="#c8a030" /><path d="M4 14V9h8v5" stroke="#5a9cd8" strokeWidth="2" /></Svg>
        </div>
        <Task i={<DevI />} t="Ovation Developer Studio" />
        <Task i={<Logo />} t="Signal Diagram Viewer - ..." c="ml-[2px]" />
        <Task i={<Logo />} t="Signal Diagram Viewer - ..." />
        <Task i={<Logo />} t="Ovation Control Builder -..." c="ml-[2px]" />
        <Task i={<Logo />} t="Ovation Control Build..." on />
        <Task i={<TrendI />} t="[Untitled] Trend" c="ml-[2px]" />
        <Task i={<TrendI />} t="[Untitled] Trend" />
        <Task i={<QtI />} t="Control Builder Help - O..." c="ml-[2px]" />
        <div className="ml-[42px]"><Bar /></div>
        <span className="ml-[3px] w-[107px] whitespace-nowrap tracking-[-0.25px]">Ovation Applications</span>
        <svg width="9" height="6" viewBox="0 0 9 6" fill="none" stroke="#000" className="mb-[6px]"><path d="m1 .5 2.500 2.500L1 5.500M5 .5 7.500 3 5 5.500" strokeWidth="1.300" /></svg>
        <div className="ml-[5px]"><Bar /></div>
        <span className="ml-[9px] w-[17px]">PL</span>
        <div className="h-[22px] w-[2px] border-l border-[#848284] bg-white" />
        <div className={"ml-[3px] flex h-[23px] w-[253px] items-center pl-[8px] " + IN}>
          <div className="flex w-[172px] gap-[8px]">
            <Svg s={16} v="0 0 16 16"><path d="M1 1h4v5l5-5h4L8 8l5 6H9L5 9v5H1z" fill="#e02020" /><path d="m10 6 5.500 9.500h-11z" fill="#f8d838" stroke="#907010" strokeWidth=".7" /><path d="M10 9v3.500M10 13.500V15" stroke="#000" /></Svg>
            <Svg s={16} v="0 0 16 16"><path d="m2 1 11 3v11L2 12z" fill="#1c7a2c" stroke="#083a10" /><path d="M5 5h3v3H5zM9 8h2v3H9z" fill="#0a3010" /><path d="M14 4v10" stroke="#c8b030" /></Svg>
            <Svg s={16} v="0 0 16 16"><circle cx="8" cy="8" r="7" fill="#30a848" /><path d="M3 10 11 3M5 12.500 13.500 5.500M8 14l6-5" stroke="#2f80e0" strokeWidth="1.800" /></Svg>
            <Svg s={16} v="0 0 16 16"><rect width="16" height="16" fill="#00ff00" /><path d="M4 3h2.500v2h3V3H12l1 3 2 7h-5.500V9h-3v4H1l2-7z" fill="#000" /></Svg>
            <Svg s={16} v="0 0 16 16"><path d="M2.500 1v14M3 2.500h5l1 1.500h5v6H9L8 8.500H3z" fill="#fff" stroke="#848284" /></Svg>
            <Svg s={16} v="0 0 16 16"><rect x="5.500" y="3.500" width="9" height="8" fill="#e8e8e8" stroke="#737173" /><path d="M2 1v4h4V1M4 5v9h4" stroke="#737173" strokeWidth="1.400" /><path d="m11 7 4.500 8.500h-9z" fill="#f8d020" stroke="#907010" strokeWidth=".7" /><path d="M11 10v3" stroke="#000" /></Svg>
            <Svg s={16} v="0 0 16 16"><path d="M1 6h3l5-5v14l-5-5H1z" fill="#efefef" stroke="#848284" /><circle cx="11.500" cy="11" r="4" fill="#e03028" /><path d="m9.800 9.300 3.400 3.400m0-3.400-3.400 3.400" stroke="#fff" strokeWidth="1.300" /></Svg>
          </div>
          <span className="w-[53px] whitespace-nowrap tracking-[-0.3px]">10:32 PM</span>
          <Svg s={16} v="0 0 16 16"><rect x=".5" y="2.500" width="15" height="10" fill="#2f68b8" stroke="#1c3c70" /><rect x="1" y="10" width="6" height="4" fill="#8ac0f0" /></Svg>
        </div>
      </div>
    </div>
  );
}
